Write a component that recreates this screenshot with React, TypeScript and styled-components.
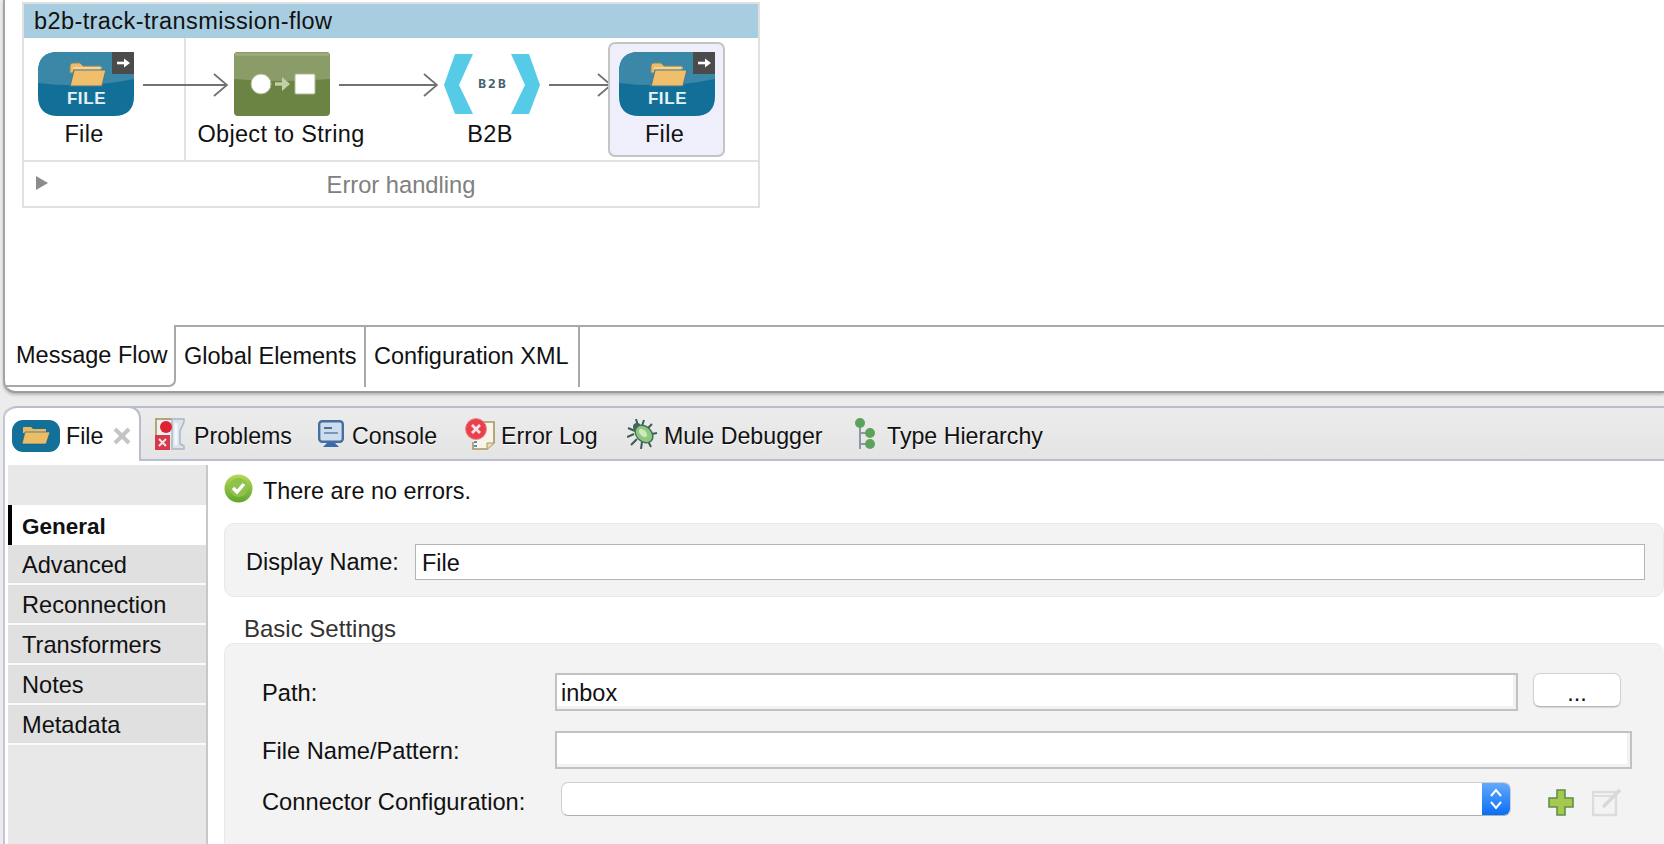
import styled, { createGlobalStyle } from "styled-components";

const GlobalStyle = createGlobalStyle`
  html, body {
    margin: 0;
    padding: 0;
    background: #ececec;
  }
  * {
    box-sizing: border-box;
  }
`;

const Page = styled.div`
  width: 1664px;
  height: 844px;
  overflow: hidden;
  display: flex;
  flex-direction: column;
  font-family: "Liberation Sans", Arial, sans-serif;
  font-size: 23.5px;
  color: #111;
  background: #ececec;
`;

/* ---- top editor ---- */
const Editor = styled.div`
  height: 393px;
  margin-left: 3px;
  background: #fff;
  border-left: 2px solid #a4a4a4;
  border-bottom: 2px solid #9c9c9c;
  border-bottom-left-radius: 12px;
  box-shadow: 0 2px 3px rgba(0, 0, 0, 0.22);
  display: flex;
  flex-direction: column;
`;

const Canvas = styled.div`
  flex: 1;
  padding: 2px 0 0 17px;
`;

const FlowBox = styled.div`
  width: 738px;
  height: 206px;
  border: 2px solid #e0e0e0;
  display: flex;
  flex-direction: column;
`;

const FlowTitle = styled.div`
  height: 34px;
  line-height: 35px;
  padding-left: 10px;
  background: #a9cde0;
  letter-spacing: 0.41px;
`;

const FlowRow = styled.div`
  height: 124px;
  border-bottom: 2px solid #e2e2e2;
  display: flex;
  align-items: flex-start;
`;

const SourceCell = styled.div`
  width: 162px;
  height: 122px;
  flex-shrink: 0;
  padding-left: 14px;
  border-right: 2px solid #e2e2e2;
  display: flex;
  align-items: flex-start;
`;

const Node = styled.div<{ $ml?: number }>`
  width: 96px;
  flex-shrink: 0;
  margin-top: 14px;
  margin-left: ${(p) => p.$ml ?? 0}px;
  display: flex;
  flex-direction: column;
  align-items: center;
`;

const NodeLabel = styled.div<{ $pr?: number }>`
  margin-top: 5px;
  height: 26px;
  line-height: 26px;
  white-space: nowrap;
  letter-spacing: 0.32px;
  padding-right: ${(p) => p.$pr ?? 0}px;
`;

const SelectedNode = styled.div`
  width: 117px;
  height: 115px;
  flex-shrink: 0;
  margin: 4px 0 0 -4px;
  padding-top: 8px;
  background: #efeffc;
  border: 2px solid #c4c4c4;
  border-radius: 7px;
  display: flex;
  flex-direction: column;
  align-items: center;
`;

const SelectedIcon = styled.div`
  width: 96px;
  height: 64px;
`;

const ArrowWrap = styled.svg<{ $ml: number }>`
  flex-shrink: 0;
  margin-top: 35px;
  margin-left: ${(p) => p.$ml}px;
  display: block;
`;

const ErrorRow = styled.div`
  flex: 1;
  display: flex;
  align-items: center;
  position: relative;
  justify-content: center;
  color: #808080;
  font-size: 23.7px;
  padding: 2px 0 0 20px;
`;

const Triangle = styled.span`
  position: absolute;
  left: 12px;
  top: 14px;
  width: 0;
  height: 0;
  border-left: 12px solid #8c8c8c;
  border-top: 7px solid transparent;
  border-bottom: 7px solid transparent;
`;

const EditorTabs = styled.div`
  height: 66px;
  display: flex;
  align-items: flex-start;
  flex-shrink: 0;
`;

const ActiveEditorTab = styled.div`
  width: 171px;
  height: 62px;
  padding: 17px 0 0 11px;
  line-height: 26px;
  white-space: nowrap;
  border-right: 2px solid #a8a8a8;
  border-bottom: 2px solid #a8a8a8;
  border-bottom-right-radius: 7px;
`;

const EditorTab = styled.div<{ $w: number }>`
  width: ${(p) => p.$w}px;
  height: 62px;
  padding: 16px 0 0 8px;
  line-height: 26px;
  white-space: nowrap;
  border-top: 2px solid #a8a8a8;
  border-right: 2px solid #a8a8a8;
`;

const TabFiller = styled.div`
  flex: 1;
  border-top: 2px solid #a8a8a8;
`;

/* ---- bottom properties panel ---- */
const Panel = styled.div`
  flex: 1;
  margin: 13px 0 0 3px;
  background: #fff;
  border-left: 2px solid #c3c6d4;
  border-top-left-radius: 12px;
  display: flex;
  flex-direction: column;
  min-height: 0;
`;

const ViewTabs = styled.div`
  height: 55px;
  flex-shrink: 0;
  display: flex;
  align-items: stretch;
  font-size: 23.2px;
  background: linear-gradient(#ececec, #e4e4e4);
  border-top: 2px solid #b9bdcf;
  border-bottom: 2px solid #b9bdcf;
  border-top-left-radius: 12px;
`;

const ActiveViewTab = styled.div`
  width: 136px;
  margin: -2px 14px -2px 0;
  padding: 2px 0 0 7px;
  background: #fff;
  border-top: 2px solid #b9bdcf;
  border-right: 2px solid #b9bdcf;
  border-radius: 12px 12px 0 0;
  display: flex;
  align-items: center;
`;

const CloseMark = styled.span`
  margin-left: 10px;
  display: flex;
`;

const ViewTab = styled.div<{ $w: number }>`
  display: flex;
  align-items: center;
  width: ${(p) => p.$w}px;
  flex-shrink: 0;
  white-space: nowrap;
  text-shadow: 0 1px 0 #fff;
`;

const TabLabel = styled.span<{ $ml: number }>`
  margin-left: ${(p) => p.$ml}px;
  line-height: 26px;
`;

const ViewTabLabel = styled(TabLabel)`
  margin-top: 4px;
`;

const PanelBody = styled.div`
  flex: 1;
  display: flex;
  min-height: 0;
  padding-top: 4px;
`;

const Sidebar = styled.div`
  width: 200px;
  margin-left: 3px;
  flex-shrink: 0;
  padding-top: 40px;
  background: #e8e8e8;
  border-right: 2px solid #c8c8c8;
`;

const SideItem = styled.div<{ $active?: boolean }>`
  height: ${(p) => (p.$active ? 40 : 38)}px;
  margin-bottom: ${(p) => (p.$active ? 0 : 2)}px;
  padding-left: ${(p) => (p.$active ? 10 : 14)}px;
  line-height: ${(p) => (p.$active ? 43 : 41)}px;
  background: ${(p) => (p.$active ? "#fff" : "#e0e0e0")};
  border-left: ${(p) => (p.$active ? "4px solid #000" : "none")};
  font-weight: ${(p) => (p.$active ? 700 : 400)};
  font-size: ${(p) => (p.$active ? 22.5 : 23.6)}px;
  box-shadow: ${(p) => (p.$active ? "none" : "0 2px 0 #fafafa")};
`;

const Content = styled.div`
  flex: 1;
  padding: 9px 0 0 16px;
  min-width: 0;
`;

const StatusLine = styled.div`
  height: 29px;
  display: flex;
  align-items: center;
  gap: 10px;
  font-size: 23.4px;
`;

const StatusText = styled.span`
  padding-top: 5px;
`;

const Group = styled.div`
  background: #f3f3f3;
  border: 1px solid #e8e8e8;
  border-right: none;
`;

const NameGroup = styled(Group)`
  height: 74px;
  margin-top: 20px;
  padding: 20px 0 0 21px;
  border-radius: 10px;
  border-right: 1px solid #e8e8e8;
  display: flex;
  align-items: flex-start;
`;

const NameLabel = styled.div`
  width: 169px;
  line-height: 36px;
  flex-shrink: 0;
`;

const SectionTitle = styled.div`
  height: 46px;
  padding: 19px 0 0 20px;
  line-height: 26px;
  font-size: 24px;
  color: #333;
`;

const SettingsGroup = styled(Group)`
  height: 230px;
  padding: 29px 0 0 37px;
  border-radius: 10px 10px 0 0;
`;

const FormRow = styled.div<{ $mb: number }>`
  display: flex;
  align-items: flex-start;
  margin-bottom: ${(p) => p.$mb}px;
`;

const FieldLabel = styled.div`
  width: 293px;
  flex-shrink: 0;
  height: 38px;
  line-height: 41px;
  white-space: nowrap;
  font-size: 23.7px;
`;

const TextField = styled.div<{ $w: number; $thin?: boolean }>`
  width: ${(p) => p.$w}px;
  height: ${(p) => (p.$thin ? 36 : 38)}px;
  padding-left: ${(p) => (p.$thin ? 6 : 4)}px;
  line-height: ${(p) => (p.$thin ? 37 : 36)}px;
  background: #fff;
  border: ${(p) => (p.$thin ? "1px solid #b4b4b4" : "2px solid #c2c2c2")};
  box-shadow: ${(p) => (p.$thin ? "none" : "inset -3px -3px 0 #f2f2f2")};
  flex-shrink: 0;
`;

const DotsButton = styled.div`
  width: 88px;
  height: 34px;
  margin-left: 15px;
  background: #fff;
  border: 1px solid #d2d2d2;
  border-bottom-color: #b8b8b8;
  border-radius: 7px;
  box-shadow: 0 1px 1px rgba(0, 0, 0, 0.12);
  text-align: center;
  line-height: 38px;
  overflow: hidden;
`;

const Dropdown = styled.div`
  width: 950px;
  height: 34px;
  margin-left: 6px;
  background: #fff;
  border: 1px solid #cfcfcf;
  border-bottom-color: #b0b0b0;
  border-radius: 7px;
  display: flex;
  justify-content: flex-end;
  overflow: hidden;
  flex-shrink: 0;
`;

const DropdownStepper = styled.div`
  width: 28px;
  background: linear-gradient(#62aafb, #0b6df6);
  display: flex;
  align-items: center;
  justify-content: center;
`;

const ActionIcon = styled.svg<{ $ml: number; $mt: number }>`
  margin-left: ${(p) => p.$ml}px;
  margin-top: ${(p) => p.$mt}px;
  flex-shrink: 0;
  display: block;
`;

/* ---- drawings ---- */
const Arrow = ({ width, ml }: { width: number; ml: number }) => (
  <ArrowWrap $ml={ml} width={width} height={24} viewBox={`0 0 ${width} 24`} fill="none" stroke="#727272" strokeWidth="1.8">
    <path d={`M0 12H${width - 1}`} />
    <path d={`M${width - 14} 1L${width - 1} 12L${width - 14} 23`} />
  </ArrowWrap>
);

const Folder = ({ x, y }: { x: number; y: number }) => (
  <g transform={`translate(${x} ${y})`}>
    <path d="M1 5Q1 2 4 2H11L14 5H32V12H1Z" fill="#eebc68" stroke="#7d8a6c" strokeWidth="1" />
    <path d="M5 9H37L33 25H1Z" fill="#efbf6c" stroke="#4f7a88" strokeWidth="1.2" />
    <path d="M4 7H33" stroke="#fff" strokeOpacity="0.7" strokeWidth="1" />
  </g>
);

const FileIcon = () => (
  <svg width="96" height="64" viewBox="0 0 96 64" style={{ display: "block" }}>
    <path d="M20 0H96V44Q96 64 76 64H20Q0 64 0 44V20Q0 0 20 0Z" fill="#126f98" />
    <path d="M20 0H96V27Q48 37 0 31V20Q0 0 20 0Z" fill="#3a87a8" />
    <rect x="74" y="0" width="22" height="22" fill="#4b4b4b" />
    <path d="M79 11H87" stroke="#fff" strokeWidth="2.6" />
    <path d="M86 6.5L92 11L86 15.5Z" fill="#fff" />
    <Folder x={31} y={9} />
    <text x="48.5" y="52" textAnchor="middle" fill="#e6f1f5" fontSize="17" fontWeight="700" fontFamily="'Liberation Sans', sans-serif" letterSpacing="0.6">
      FILE
    </text>
  </svg>
);

const ObjectIcon = () => (
  <svg width="96" height="64" viewBox="0 0 96 64" style={{ display: "block" }}>
    <rect width="96" height="64" rx="4" fill="#6b8343" />
    <path d="M4 0H92Q96 0 96 4V27Q48 31 0 27V4Q0 0 4 0Z" fill="#8a9c67" />
    <rect x="1" y="1" width="94" height="3" fill="#9aaa7b" />
    <circle cx="27" cy="32" r="10" fill="#fff" stroke="#aebb94" strokeWidth="1" />
    <rect x="61" y="22" width="20" height="20" rx="1" fill="#fff" stroke="#aebb94" strokeWidth="1" />
    <path d="M41 32H50" stroke="#c2cfa8" strokeWidth="3.4" fill="none" />
    <path d="M48 25L56 32L48 39Z" fill="#c2cfa8" />
  </svg>
);

const B2BIcon = () => (
  <svg width="96" height="60" viewBox="0 0 96 60" style={{ display: "block", marginTop: 2, marginBottom: 2 }}>
    <path d="M11 0H29L15 31L29 60H11L0 31Z" fill="#55cbe8" />
    <path d="M85 0H67L81 31L67 60H85L96 31Z" fill="#55cbe8" />
    <text x="49" y="34" textAnchor="middle" fill="#43606c" fontSize="13" fontWeight="700" fontFamily="'DejaVu Sans Mono', monospace" letterSpacing="2">
      B2B
    </text>
  </svg>
);

const FileTabIcon = () => (
  <svg width="48" height="32" viewBox="0 0 48 32" style={{ display: "block", flexShrink: 0 }}>
    <rect width="48" height="32" rx="11" fill="#157099" />
    <path d="M11 8Q11 7 12 7H19L21 9H34V13H11Z" fill="#e8b864" />
    <path d="M13 12H38L34 24H10Z" fill="#edbc68" stroke="#0f5f80" strokeWidth="0.6" />
  </svg>
);

const ProblemsIcon = () => (
  <svg width="30" height="32" viewBox="0 0 30 32" style={{ display: "block", flexShrink: 0 }}>
    <rect x="1" y="1" width="17" height="18" fill="#eef0f4" />
    <path d="M1 17V1H17" fill="none" stroke="#b3a574" strokeWidth="2" />
    <path d="M17 1H29V4L25 13V26L29 28V31H17Z" fill="#dbe4ec" stroke="#a6b6c4" strokeWidth="1.4" />
    <path d="M21 5V27" stroke="#f6f8fa" strokeWidth="3" />
    <circle cx="11" cy="9" r="6" fill="#dd2233" />
    <rect x="0" y="17" width="15" height="15" fill="#d8384c" />
    <path d="M4 21L11 28M11 21L4 28" stroke="#f4e6e8" strokeWidth="2" />
  </svg>
);

const ConsoleIcon = () => (
  <svg width="26" height="28" viewBox="0 0 26 28" style={{ display: "block", flexShrink: 0 }}>
    <rect x="1.2" y="1.2" width="23.6" height="20.6" rx="3" fill="#cfdcee" stroke="#44709f" strokeWidth="2.4" />
    <path d="M6 8H14" stroke="#44709f" strokeWidth="2" />
    <path d="M6 13H20" stroke="#7797bd" strokeWidth="2" />
    <path d="M9 23H17L21 27H5Z" fill="#3c69ab" />
  </svg>
);

const ErrorLogIcon = () => (
  <svg width="30" height="32" viewBox="0 0 30 32" style={{ display: "block", flexShrink: 0 }}>
    <path d="M12 4H29V25L22 31H8V24" fill="#f7f4ea" stroke="#a8955e" strokeWidth="1.6" />
    <path d="M22 31V25H29" fill="#eadfb8" stroke="#a8955e" strokeWidth="1" />
    <circle cx="11" cy="11" r="10.5" fill="#e8404c" stroke="#f08a92" strokeWidth="1" />
    <path d="M7 7L15 15M15 7L7 15" stroke="#fbe3e5" strokeWidth="2.8" />
    <path d="M9 24H12M9 28H12" stroke="#5f8bb5" strokeWidth="2" />
  </svg>
);

const BugIcon = () => (
  <svg width="30" height="30" viewBox="0 0 30 30" style={{ display: "block", flexShrink: 0 }}>
    <g stroke="#3d5a55" strokeWidth="2" fill="none">
      <path d="M9 0L11 7M17 1L15 7M1 9L8 12M0 18L7 15M4 26L10 20M14 30L15 23M24 28L21 22M30 14L25 15M25 5L21 9" />
    </g>
    <circle cx="10" cy="8" r="4" fill="#3f6660" />
    <ellipse cx="17" cy="15" rx="10" ry="7.5" transform="rotate(45 17 15)" fill="#8fc77f" stroke="#3f6f5a" strokeWidth="1.4" />
    <ellipse cx="16" cy="14" rx="5" ry="3" transform="rotate(45 16 14)" fill="#cfe8bd" />
  </svg>
);

const HierarchyIcon = () => (
  <svg width="20" height="32" viewBox="0 0 20 32" style={{ display: "block", flexShrink: 0 }}>
    <path d="M5 6V31M5 15H15M5 26H15" stroke="#8e97a8" strokeWidth="2" fill="none" />
    <circle cx="5" cy="5" r="5" fill="#5da25c" />
    <circle cx="15" cy="15" r="5" fill="#5da25c" />
    <circle cx="15" cy="26" r="5" fill="#5da25c" />
  </svg>
);

const CheckIcon = () => (
  <svg width="29" height="29" viewBox="0 0 29 29" style={{ display: "block", flexShrink: 0 }}>
    <defs>
      <linearGradient id="okFill" x1="0" y1="0" x2="0" y2="1">
        <stop offset="0" stopColor="#b6d95a" />
        <stop offset="1" stopColor="#5fa52a" />
      </linearGradient>
    </defs>
    <circle cx="14.5" cy="14.5" r="14" fill="url(#okFill)" />
    <circle cx="14.5" cy="13.5" r="9.5" fill="#8fc24a" />
    <path d="M9 14L13 18L20 10" stroke="#fff" strokeWidth="3.4" fill="none" />
  </svg>
);

const tabs = ["General", "Advanced", "Reconnection", "Transformers", "Notes", "Metadata"];

export default function App() {
  return (
    <Page>
      <GlobalStyle />
      <Editor>
        <Canvas>
          <FlowBox>
            <FlowTitle>b2b-track-transmission-flow</FlowTitle>
            <FlowRow>
              <SourceCell>
                <Node>
                  <FileIcon />
                  <NodeLabel $pr={4}>File</NodeLabel>
                </Node>
                <Arrow width={85} ml={9} />
              </SourceCell>
              <Node $ml={48}>
                <ObjectIcon />
                <NodeLabel $pr={2}>Object to String</NodeLabel>
              </Node>
              <Arrow width={99} ml={9} />
              <Node $ml={6}>
                <B2BIcon />
                <NodeLabel $pr={4}>B2B</NodeLabel>
              </Node>
              <Arrow width={63} ml={9} />
              <SelectedNode>
                <SelectedIcon>
                  <FileIcon />
                </SelectedIcon>
                <NodeLabel $pr={4}>File</NodeLabel>
              </SelectedNode>
            </FlowRow>
            <ErrorRow>
              <Triangle />
              Error handling
            </ErrorRow>
          </FlowBox>
        </Canvas>
        <EditorTabs>
          <ActiveEditorTab>Message Flow</ActiveEditorTab>
          <EditorTab $w={190}>Global Elements</EditorTab>
          <EditorTab $w={214}>Configuration XML</EditorTab>
          <TabFiller />
        </EditorTabs>
      </Editor>

      <Panel>
        <ViewTabs>
          <ActiveViewTab>
            <FileTabIcon />
            <TabLabel $ml={6}>File</TabLabel>
            <CloseMark>
              <svg width="18" height="18" viewBox="0 0 18 18">
                <path d="M2 2L16 16M16 2L2 16" stroke="#c4c4c4" strokeWidth="4" />
              </svg>
            </CloseMark>
          </ActiveViewTab>
          <ViewTab $w={163}>
            <ProblemsIcon />
            <ViewTabLabel $ml={9}>Problems</ViewTabLabel>
          </ViewTab>
          <ViewTab $w={147}>
            <ConsoleIcon />
            <ViewTabLabel $ml={8}>Console</ViewTabLabel>
          </ViewTab>
          <ViewTab $w={162}>
            <ErrorLogIcon />
            <ViewTabLabel $ml={6}>Error Log</ViewTabLabel>
          </ViewTab>
          <ViewTab $w={228}>
            <BugIcon />
            <ViewTabLabel $ml={7}>Mule Debugger</ViewTabLabel>
          </ViewTab>
          <ViewTab $w={240}>
            <HierarchyIcon />
            <ViewTabLabel $ml={12}>Type Hierarchy</ViewTabLabel>
          </ViewTab>
        </ViewTabs>
        <PanelBody>
          <Sidebar>
            {tabs.map((t, i) => (
              <SideItem key={t} $active={i === 0}>
                {t}
              </SideItem>
            ))}
          </Sidebar>
          <Content>
            <StatusLine>
              <CheckIcon />
              <StatusText>There are no errors.</StatusText>
            </StatusLine>
            <NameGroup>
              <NameLabel>Display Name:</NameLabel>
              <TextField $w={1230} $thin>
                File
              </TextField>
            </NameGroup>
            <SectionTitle>Basic Settings</SectionTitle>
            <SettingsGroup>
              <FormRow $mb={20}>
                <FieldLabel>Path:</FieldLabel>
                <TextField $w={963}>inbox</TextField>
                <DotsButton>...</DotsButton>
              </FormRow>
              <FormRow $mb={13}>
                <FieldLabel>File Name/Pattern:</FieldLabel>
                <TextField $w={1077} />
              </FormRow>
              <FormRow $mb={0}>
                <FieldLabel>Connector Configuration:</FieldLabel>
                <Dropdown>
                  <DropdownStepper>
                    <svg width="16" height="26" viewBox="0 0 16 26" fill="none" stroke="#fff" strokeWidth="2">
                      <path d="M3 10L8 4L13 10M3 16L8 22L13 16" />
                    </svg>
                  </DropdownStepper>
                </Dropdown>
                <ActionIcon $ml={37} $mt={7} width="26" height="27" viewBox="0 0 26 27">
                  <path d="M9 1H17V9H25V18H17V26H9V18H1V9H9Z" fill="#a6c84f" stroke="#5f8f4a" strokeWidth="1.6" />
                </ActionIcon>
                <ActionIcon $ml={18} $mt={5} width="30" height="30" viewBox="0 0 30 30">
                  <rect x="1" y="5" width="23" height="23" fill="#f3f3f3" stroke="#dcdcdc" strokeWidth="2.4" />
                  <path d="M1 9H24" stroke="#dcdcdc" strokeWidth="2" />
                  <path d="M11 20L28 3" stroke="#d8d8d8" strokeWidth="3.4" />
                </ActionIcon>
              </FormRow>
            </SettingsGroup>
          </Content>
        </PanelBody>
      </Panel>
    </Page>
  );
}
